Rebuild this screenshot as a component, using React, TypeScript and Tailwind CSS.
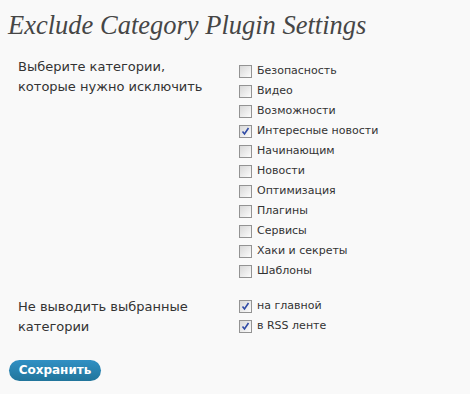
import React from "react";

const cats: [string, boolean][] = [
  ["Безопасность", false],
  ["Видео", false],
  ["Возможности", false],
  ["Интересные новости", true],
  ["Начинающим", false],
  ["Новости", false],
  ["Оптимизация", false],
  ["Плагины", false],
  ["Сервисы", false],
  ["Хаки и секреты", false],
  ["Шаблоны", false],
];

function Box({ checked }: { checked: boolean }) {
  return (
    <span className="relative inline-block w-[13px] h-[13px] border border-[#939393] bg-gradient-to-br from-[#d8d8d8] to-[#fcfcfc] shrink-0">
      {checked && (
        <svg className="absolute left-[1px] top-[1px]" width="9" height="9" viewBox="0 0 9 9">
          <path d="M1.5 4.5 L3.5 7 L7.5 1" fill="none" stroke="#2f4aa5" strokeWidth="1.6" />
        </svg>
      )}
    </span>
  );
}

function Row({ label, checked }: { label: string; checked: boolean }) {
  return (
    <div className="flex items-center h-[20px] gap-[5px]">
      <Box checked={checked} />
      <span>{label}</span>
    </div>
  );
}

export default function App() {
  return (
    <div className="w-[470px] h-[394px] bg-[#f9f9f9] text-[#333] overflow-hidden" style={{ fontFamily: '"DejaVu Sans", Verdana, sans-serif' }}>
      <h2 className="pl-[8px] pt-[10px] text-[26.5px] leading-[30px] italic text-[#464646]" style={{ fontFamily: '"Liberation Serif", Georgia, serif' }}>
        Exclude Category Plugin Settings
      </h2>
      <div className="flex mt-[17px]">
        <div className="w-[239px] pl-[18px] text-[13px] leading-[20px]">
          Выберите категории,<br />которые нужно исключить
        </div>
        <div className="text-[11px] pt-[4px]">
          {cats.map(([l, c]) => (
            <Row key={l} label={l} checked={c} />
          ))}
        </div>
      </div>
      <div className="flex mt-[15px]">
        <div className="w-[239px] pl-[18px] text-[13px] leading-[20px] pt-[1px]">
          Не выводить выбранные<br />категории
        </div>
        <div className="text-[11px]">
          <Row label="на главной" checked />
          <Row label="в RSS ленте" checked />
        </div>
      </div>
      <div className="pl-[9px] mt-[20px]">
        <button className="h-[21px] w-[92px] rounded-full bg-gradient-to-b from-[#3090c4] to-[#21759b] text-white font-bold text-[12px] leading-[21px]">
          Сохранить
        </button>
      </div>
    </div>
  );
}
